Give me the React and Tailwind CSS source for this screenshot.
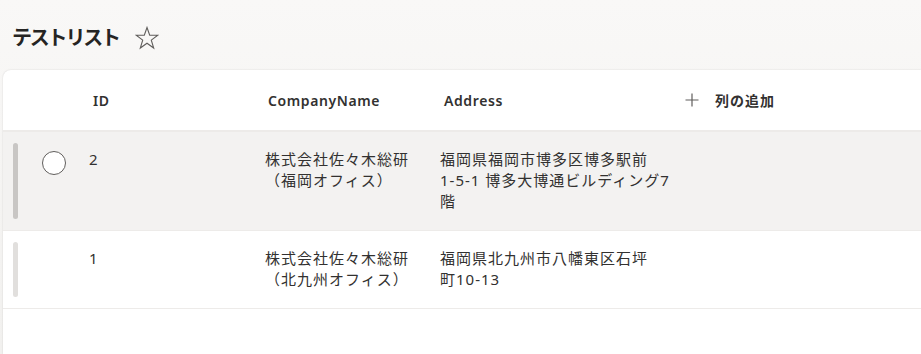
import React from 'react';

const rows = [
  {
    id: 2,
    company: ['株式会社佐々木総研', '（福岡オフィス）'],
    address: ['福岡県福岡市博多区博多駅前', '1-5-1 博多大博通ビルディング7', '階'],
    selected: true,
  },
  {
    id: 1,
    company: ['株式会社佐々木総研', '（北九州オフィス）'],
    address: ['福岡県北九州市八幡東区石坪', '町10-13'],
    selected: false,
  },
];

const font = { fontFamily: '"Noto Sans", "Noto Sans CJK JP", sans-serif' };

function Star() {
  return (
    <svg width="24" height="24" viewBox="0 0 24 24" fill="none" stroke="#605e5c" strokeWidth="1.1" strokeLinejoin="miter">
      <path d="M12 1.5 L14.7 9.3 L22.8 9.3 L16.3 14.1 L18.7 22 L12 17.2 L5.3 22 L7.7 14.1 L1.2 9.3 L9.3 9.3 Z" />
    </svg>
  );
}

function Plus() {
  return (
    <svg width="14" height="14" viewBox="0 0 14 14" stroke="#605e5c" strokeWidth="1.2">
      <path d="M7 0.5 V13.5 M0.5 7 H13.5" />
    </svg>
  );
}

export default function App() {
  return (
    <div className="w-[921px] h-[354px] overflow-hidden bg-gradient-to-b from-[#f9f8f7] to-[#f2f1ef] text-[#323130]" style={font}>
      {/* Title */}
      <div className="h-[70px] flex items-center pl-3 pt-[6px] gap-[16px]">
        <h1 className="text-[20px] font-semibold tracking-[-2.2px] text-[#252423]">テストリスト</h1>
        <Star />
      </div>

      {/* List card */}
      <div className="ml-[3px] h-[284px] bg-white rounded-tl-[8px] shadow-[0_0_2px_rgba(0,0,0,0.14)]">
        {/* Header */}
        <div className="h-[62px] flex items-center border-b-2 border-[#edebe9] text-[14px] font-semibold tracking-[0.6px]">
          <div className="w-[86px]" />
          <div className="w-[176px] pl-1">ID</div>
          <div className="w-[175px] pl-[3px]">CompanyName</div>
          <div className="w-[245px] pl-1">Address</div>
          <div className="flex items-center gap-[16px]">
            <Plus />
            <span className="tracking-[1px]">列の追加</span>
          </div>
        </div>

        {/* Rows */}
        {rows.map((r) => (
          <div
            key={r.id}
            className={`flex border-b border-[#edebe9] text-[15px] leading-[21px] tracking-[1px] ${r.selected ? 'bg-[#f3f2f1]' : 'bg-white'}`}
          >
            <div className="w-[86px] flex pl-[10px] py-[11px]">
              <div className={`w-[5px] rounded-full ${r.selected ? 'bg-[#c8c6c4]' : 'bg-[#e1dfdd]'}`} />
              {r.selected && (
                <div className="ml-[24px] mt-[8px] w-[24px] h-[24px] rounded-full border border-[#605e5c] bg-white" />
              )}
            </div>
            <div className="w-[176px] pt-[17px] pb-[18px]">{r.id}</div>
            <div className="w-[175px] pt-[17px] pb-[18px]">
              {r.company.map((l) => (
                <div key={l}>{l}</div>
              ))}
            </div>
            <div className="w-[245px] pt-[17px] pb-[18px]">
              {r.address.map((l) => (
                <div key={l}>{l}</div>
              ))}
            </div>
          </div>
        ))}
      </div>
    </div>
  );
}
